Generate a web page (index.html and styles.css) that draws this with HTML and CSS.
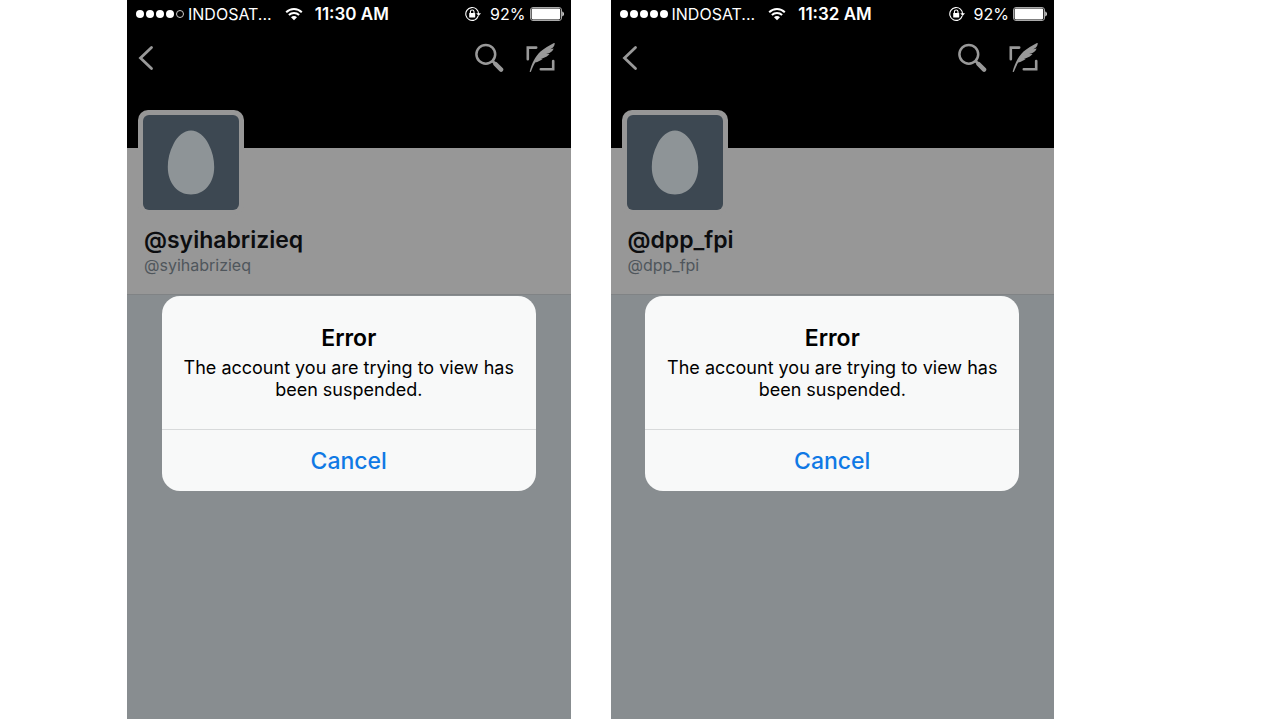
FILE: index.html
```html
<!DOCTYPE html>
<html lang="en">
<head>
    <meta charset="UTF-8">
    <meta name="viewport" content="width=device-width, initial-scale=1.0">
    <title>Suspended accounts</title>
    <link rel="stylesheet" href="styles.css">
</head>
<body>
    <!-- shared icons -->
    <svg class="sprite" aria-hidden="true">
        <symbol id="wifi" viewBox="0 0 18 14">
            <path d="M1.2 5.2a11 11 0 0 1 15.6 0M3.9 8a7.2 7.2 0 0 1 10.2 0" fill="none" stroke="#fff" stroke-width="2"/>
            <path d="M9 13.2 6 10.2a4.2 4.2 0 0 1 6 0z" fill="#fff"/>
        </symbol>
        <symbol id="lock" viewBox="0 0 16 16">
            <path d="M13.6 8A6.4 6.4 0 1 0 9.6 13.9" fill="none" stroke="#fff" stroke-width="1.1"/>
            <path d="M13.2 10A6.4 6.4 0 0 1 9.6 13.9" fill="none" stroke="#fff" stroke-width="1.1"/>
            <path d="M11.2 7.2H16L13.6 10z" fill="#fff"/>
            <rect x="4.2" y="7" width="6" height="4.4" rx=".5" fill="#fff"/>
            <path d="M5.4 7.2V5.8a1.8 1.8 0 0 1 3.6 0v1.4" fill="none" stroke="#fff" stroke-width="1.1"/>
        </symbol>
        <symbol id="battery" viewBox="0 0 34 14">
            <rect x=".5" y=".5" width="31" height="13" rx="2.5" fill="none" stroke="#aaa"/>
            <rect x="1.6" y="1.6" width="28.6" height="10.8" rx="1.4" fill="#fff"/>
            <path d="M32.4 4.6c1.9.6 1.9 4.2 0 4.8z" fill="#fff"/>
        </symbol>
        <symbol id="back" viewBox="0 0 16 26">
            <path d="M13.5 2.5 2.5 13l11 10.5" fill="none" stroke="#999" stroke-width="2.8" stroke-linecap="round"/>
        </symbol>
        <symbol id="search" viewBox="0 0 30 30">
            <circle cx="11.8" cy="11.3" r="9.4" fill="none" stroke="#999" stroke-width="2.5"/>
            <path d="M18.5 18l3 3" stroke="#999" stroke-width="2.6"/>
            <path d="M21.5 21l5.6 5.6" stroke="#999" stroke-width="4.4" stroke-linecap="round"/>
        </symbol>
        <symbol id="compose" viewBox="0 0 30 30">
            <path d="M1.8 16.2V4.6h8.4M27.2 18v8.2H14.8" fill="none" stroke="#999" stroke-width="2.6" stroke-linecap="round"/>
            <path d="M3.6 28.8C5.8 20.5 9 14 14.5 8.6 18.5 4.8 23.5 2.8 28.6-.4 29 1.4 28 3.6 26.4 5L24.2 6.2 27.6 5.6C27 7.6 25.4 9.2 23 10.2L20.2 11 23.6 11C22 13 19.8 14.2 17.4 15L14.8 15.6 17 15.8C14.6 17.8 12 18.8 9.2 19.6 7.4 22.6 6.2 25.6 4.8 29z" fill="#999"/>
        </symbol>
        <symbol id="egg" viewBox="0 0 48 65">
            <path d="M24 .5C31 .5 37.5 6 41.5 14 45.500 21.500 47.200 29.500 47.200 37 47.200 53.500 37 64.500 24 64.500S.800 53.500.800 37C.800 29.500 2.500 21.500 6.500 14 10.500 6 17 .5 24 .5z" fill="#8e9497"/>
        </symbol>
    </svg>

    <main class="screens">
        <section class="phone">
            <header class="cover">
                <div class="status-bar">
                    <div class="signal"><i></i><i></i><i></i><i></i><i class="empty"></i></div>
                    <span class="carrier">INDOSAT...</span>
                    <svg class="wifi"><use href="#wifi"/></svg>
                    <time class="clock">11:30 AM</time>
                    <svg class="lock"><use href="#lock"/></svg>
                    <span class="percent">92%</span>
                    <svg class="battery"><use href="#battery"/></svg>
                </div>
                <nav class="nav-bar">
                    <button class="icon-button back" aria-label="Back"><svg><use href="#back"/></svg></button>
                    <button class="icon-button" aria-label="Search"><svg><use href="#search"/></svg></button>
                    <button class="icon-button" aria-label="Compose"><svg><use href="#compose"/></svg></button>
                </nav>
            </header>
            <div class="profile">
                <div class="avatar"><svg><use href="#egg"/></svg></div>
                <h1 class="name">@syihabrizieq</h1>
                <p class="handle">@syihabrizieq</p>
            </div>
            <div class="alert" role="alertdialog" aria-labelledby="title-1">
                <h2 class="alert-title" id="title-1">Error</h2>
                <p class="alert-text">The account you are trying to view has been suspended.</p>
                <button class="alert-button">Cancel</button>
            </div>
        </section>

        <section class="phone">
            <header class="cover">
                <div class="status-bar">
                    <div class="signal"><i></i><i></i><i></i><i></i><i></i></div>
                    <span class="carrier">INDOSAT...</span>
                    <svg class="wifi"><use href="#wifi"/></svg>
                    <time class="clock">11:32 AM</time>
                    <svg class="lock"><use href="#lock"/></svg>
                    <span class="percent">92%</span>
                    <svg class="battery"><use href="#battery"/></svg>
                </div>
                <nav class="nav-bar">
                    <button class="icon-button back" aria-label="Back"><svg><use href="#back"/></svg></button>
                    <button class="icon-button" aria-label="Search"><svg><use href="#search"/></svg></button>
                    <button class="icon-button" aria-label="Compose"><svg><use href="#compose"/></svg></button>
                </nav>
            </header>
            <div class="profile">
                <div class="avatar"><svg><use href="#egg"/></svg></div>
                <h1 class="name">@dpp_fpi</h1>
                <p class="handle">@dpp_fpi</p>
            </div>
            <div class="alert" role="alertdialog" aria-labelledby="title-2">
                <h2 class="alert-title" id="title-2">Error</h2>
                <p class="alert-text">The account you are trying to view has been suspended.</p>
                <button class="alert-button">Cancel</button>
            </div>
        </section>
    </main>
</body>
</html>
```
FILE: styles.css
```css
* {
    box-sizing: border-box;
    margin: 0;
    padding: 0;
}

body {
    font-family: Inter, "Liberation Sans", sans-serif;
    background: white;
}

button {
    font-family: inherit;
    background: none;
    border: none;
    cursor: pointer;
}

svg {
    display: block;
}

.sprite {
    position: absolute;
    width: 0;
    height: 0;
}

.screens {
    display: grid;
    grid-template-columns: 1fr 1fr;
    gap: 40px;
    min-height: 100vh;
    padding: 0 226px 1px 127px;
}

.phone {
    position: relative;
    background: #888d90;
}

.cover {
    height: 148px;
    background: black;
}

/* status bar */
.status-bar {
    display: flex;
    align-items: center;
    height: 28px;
    padding: 0 7px 0 9px;
    color: white;
    font-size: 16px;
    line-height: 20px;
}

.signal {
    display: flex;
    gap: 2px;
    margin-right: 4px;
}

.signal i {
    width: 8px;
    height: 8px;
    border-radius: 50%;
    background: white;
}

.signal .empty {
    background: none;
    border: 1px solid #ccc;
}

.wifi {
    width: 18px;
    height: 14px;
    margin: 0 12px 0 13px;
}

.clock {
    font-size: 17px;
    font-weight: 600;
}

.lock {
    width: 16px;
    height: 16px;
    margin: 0 9px 0 auto;
}

.battery {
    width: 34px;
    height: 14px;
    margin-left: 4px;
}

/* navigation */
.nav-bar {
    display: flex;
    align-items: center;
    gap: 22px;
    height: 60px;
    padding: 0 15px 0 11px;
}

.icon-button svg {
    width: 30px;
    height: 30px;
}

.back {
    margin-right: auto;
}

.back svg {
    width: 16px;
    height: 26px;
}

/* profile */
.profile {
    display: flow-root;
    height: 147px;
    padding: 0 17px 0 11px;
    background: #979797;
    border-bottom: 1px solid #808385;
}

.avatar {
    display: grid;
    place-items: center;
    width: 106px;
    height: 105px;
    margin-top: -38px;
    background: #979797;
    border-radius: 10px;
}

.avatar svg {
    box-sizing: content-box;
    width: 48px;
    height: 65px;
    padding: 15px 24px;
    background: #3d4852;
    border-radius: 6px;
}

.name,
.handle {
    padding-left: 6px;
}

.name {
    color: #0c0d0f;
    font-size: 23px;
    font-weight: 600;
    line-height: 28px;
    margin-top: 11px;
}

.handle {
    color: #4f565c;
    font-size: 16px;
    line-height: 22px;
}

/* alert */
.alert {
    position: absolute;
    top: 296px;
    left: 0;
    right: 0;
    width: 374px;
    max-width: 90%;
    margin: 0 auto;
    padding-top: 28px;
    background: #f8f9f9;
    border-radius: 18px;
    text-align: center;
    overflow: hidden;
}

.alert-title {
    font-size: 23px;
    font-weight: 600;
    line-height: 28px;
}

.alert-text {
    font-size: 18px;
    line-height: 22px;
    padding: 5px 20px 28px;
}

.alert-button {
    display: block;
    width: 100%;
    height: 62px;
    border-top: 1px solid #d8dadb;
    color: #1079e5;
    font-size: 23px;
    font-weight: 500;
}
```
